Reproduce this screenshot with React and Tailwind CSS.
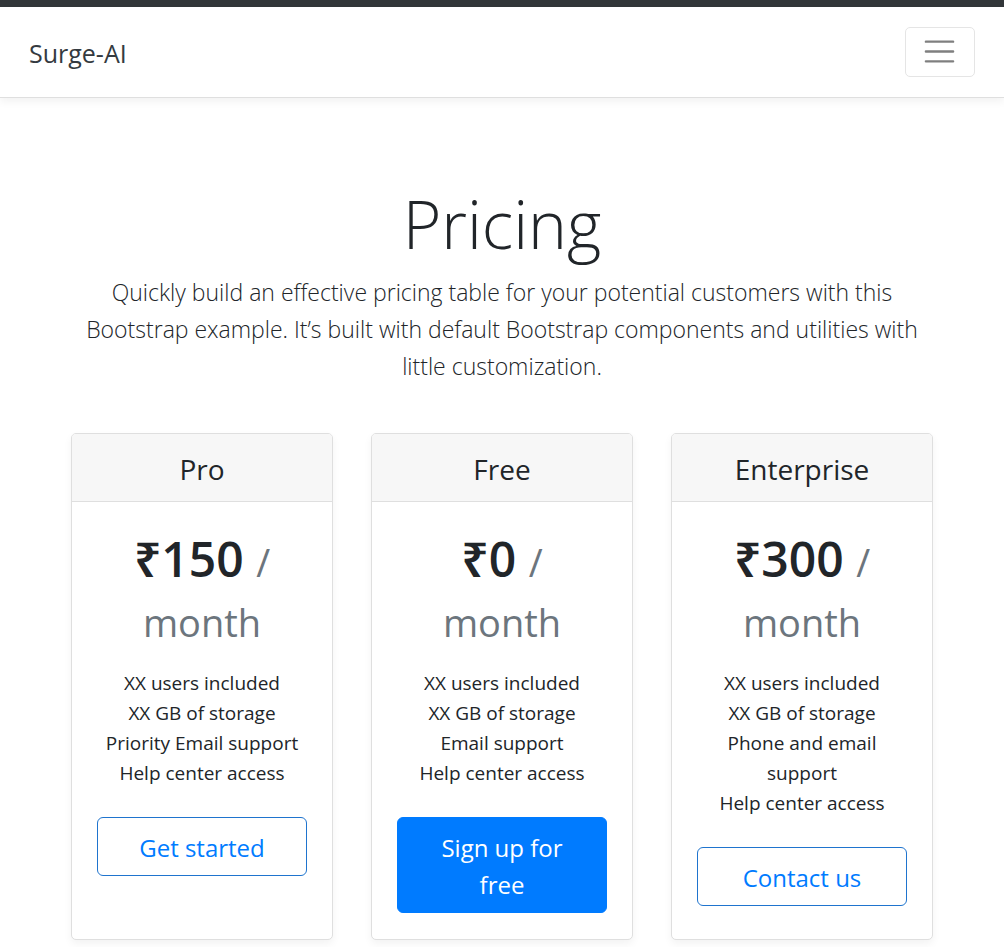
const plans = [
  {
    name: "Pro",
    price: "₹150",
    features: ["XX users included", "XX GB of storage", "Priority Email support", "Help center access"],
    action: "Get started",
  },
  {
    name: "Free",
    price: "₹0",
    features: ["XX users included", "XX GB of storage", "Email support", "Help center access"],
    action: "Sign up for free",
    primary: true,
  },
  {
    name: "Enterprise",
    price: "₹300",
    features: ["XX users included", "XX GB of storage", "Phone and email support", "Help center access"],
    action: "Contact us",
  },
];

function PlanCard({ plan }) {
  return (
    <section className="flex flex-col overflow-hidden rounded-[5px] border border-[#dfdfdf] bg-white text-center shadow-[0_4px_8px_rgba(0,0,0,0.05)]">
      <header className="border-b border-[#dfdfdf] bg-[#f7f7f7] pt-[17px] pb-[14px]">
        <h2 className="text-[28px] leading-9">{plan.name}</h2>
      </header>
      <div className="flex-1 px-[25px] pt-[25px] pb-[26px]">
        <p className="mb-[15px] text-[48px] leading-16 font-semibold">
          {plan.price} <small className="text-[38px] leading-10 font-normal text-[#6c757d]">/</small>
          <small className="block text-[38px] leading-[62px] font-normal text-[#6c757d]">month</small>
        </p>
        <ul className="mb-[29px] text-[19px] leading-[30px]">
          {plan.features.map((feature) => (
            <li key={feature}>{feature}</li>
          ))}
        </ul>
        <button
          type="button"
          className={
            plan.primary
              ? "w-full rounded-md border border-[#007bff] bg-[#007bff] px-5 pt-[11px] pb-[9px] text-[24px] leading-[37px] text-white"
              : "w-full rounded-md border border-[#1f74ce] px-5 pt-[11px] pb-[9px] text-[24px] leading-[37px] text-[#007bff]"
          }
        >
          {plan.action}
        </button>
      </div>
    </section>
  );
}

export default function App() {
  return (
    <div className="border-t-7 border-[#323639] bg-white font-['Open_Sans','Noto_Sans',sans-serif] text-[#212529]">
      <nav className="flex items-center justify-between border-b border-[#dfdfdf] px-[29px] py-5 shadow-[0_4px_8px_rgba(0,0,0,0.05)]">
        <a href="#home" className="pt-[2px] text-[25px] leading-9 text-[#343a40]">Surge-AI</a>
        <button
          type="button"
          aria-label="Toggle navigation"
          className="rounded-[5px] border border-[#e5e5e5] pt-[5px] pr-4 pb-[6px] pl-[15px]"
        >
          <svg viewBox="0 0 30 30" className="size-[37px]" fill="none" stroke="rgba(0,0,0,0.5)" strokeWidth="2" strokeLinecap="round" strokeMiterlimit="10" aria-hidden="true">
            <path d="M4 7h22M4 15h22M4 23h22" />
          </svg>
        </button>
      </nav>
      <header className="mx-auto max-w-[875px] px-5 pt-[85px] pb-12 text-center font-light">
        <h1 className="mb-[11px] text-[66px] leading-20">Pricing</h1>
        <p className="text-[23px] leading-[37px]">
          Quickly build an effective pricing table for your potential customers with this Bootstrap example. It’s built
          with default Bootstrap components and utilities with little customization.
        </p>
      </header>
      <main className="mx-auto mb-2 grid max-w-[862px] grid-cols-3 gap-[38px]">
        {plans.map((plan) => (
          <PlanCard key={plan.name} plan={plan} />
        ))}
      </main>
    </div>
  );
}
